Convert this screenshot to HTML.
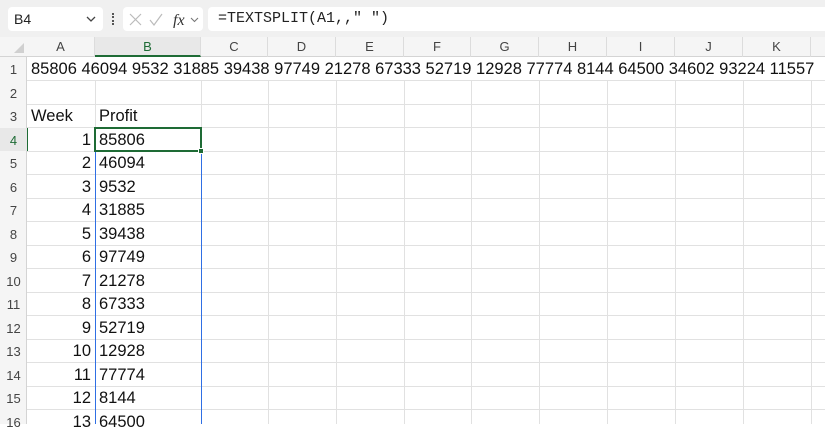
<!DOCTYPE html>
<html><head><meta charset="utf-8"><style>
*{margin:0;padding:0;box-sizing:border-box}
body{width:825px;height:424px;overflow:hidden;background:#fff;font-family:"Liberation Sans",sans-serif;position:relative}
.tb{position:absolute;left:0;top:0;width:825px;height:37px;background:#f0f0f0}
.box{position:absolute;background:#fff;border-radius:4px;top:7px;height:24px}
.abs{position:absolute}
.hdr{position:absolute;top:37px;height:20px;left:0;width:825px;background:#f5f5f5;border-bottom:1px solid #d4d4d4}
.rh{position:absolute;left:0;top:57px;width:27px;height:367px;background:#f5f5f5;border-right:1px solid #d4d4d4}
.ch{position:absolute;top:37px;height:20px;font-size:13px;color:#444;text-align:center;line-height:20px;border-right:1px solid #dcdcdc}
.rn{position:absolute;left:0;width:27px;font-size:13px;color:#444;text-align:center;height:23.5px;line-height:25px}
.c{position:absolute;font-size:16.5px;color:#111;height:23.5px;line-height:25px;white-space:nowrap}
.gl{position:absolute;left:27px;width:798px;height:1px;background:#e1e1e1}
.vl{position:absolute;top:57px;width:1px;height:367px;background:#e1e1e1}
</style></head><body>
<div class="tb"></div>
<div class="box" style="left:8px;width:95px"></div>
<div class="abs" style="left:14px;top:11px;font-size:14px;color:#222">B4</div>
<svg class="abs" style="left:86px;top:15px" width="10" height="8"><path d="M1 2l4 4 4-4" stroke="#444" fill="none" stroke-width="1.3"/></svg>
<div class="abs" style="left:112px;top:13px;width:2px;height:12px;border-left:2px dotted #555"></div>
<div class="box" style="left:123px;width:80px"></div>
<svg class="abs" style="left:128px;top:12px" width="75" height="16"><path d="M2 2l11 11M13 2L2 13" stroke="#bbb" stroke-width="1.2"/><path d="M22 8l4 5 8-11" stroke="#bbb" fill="none" stroke-width="1.2"/><text x="45" y="13" font-family="Liberation Serif" font-style="italic" font-size="16" fill="#333">fx</text><path d="M63 6l3.5 3.5 3.5-3.5" stroke="#777" fill="none" stroke-width="1.1"/></svg>
<div class="box" style="left:208px;width:625px"></div>
<div class="abs" style="left:218px;top:10px;font-size:15px;font-family:'Liberation Mono',monospace;color:#222">=TEXTSPLIT(A1,," ")</div>
<div class="hdr"></div>
<div class="rh"></div>
<svg class="abs" style="left:14px;top:43px" width="10" height="10"><path d="M10 0v10H0z" fill="#d0d0d0"/></svg>
<div class="ch" style="left:27px;width:68px">A</div>
<div class="ch" style="left:95px;width:106px;color:#1e6b35;background:#e8e8e8;border-bottom:2px solid #1e6b35">B</div>
<div class="ch" style="left:201px;width:67px">C</div>
<div class="ch" style="left:268px;width:68px">D</div>
<div class="ch" style="left:336px;width:68px">E</div>
<div class="ch" style="left:404px;width:67px">F</div>
<div class="ch" style="left:471px;width:68px">G</div>
<div class="ch" style="left:539px;width:68px">H</div>
<div class="ch" style="left:607px;width:68px">I</div>
<div class="ch" style="left:675px;width:68px">J</div>
<div class="ch" style="left:743px;width:68px">K</div>
<div class="vl" style="left:95px"></div><div class="vl" style="left:201px"></div><div class="vl" style="left:268px"></div><div class="vl" style="left:336px"></div><div class="vl" style="left:404px"></div><div class="vl" style="left:471px"></div><div class="vl" style="left:539px"></div><div class="vl" style="left:607px"></div><div class="vl" style="left:675px"></div><div class="vl" style="left:743px"></div><div class="vl" style="left:811px"></div>
<div class="gl" style="top:80px"></div><div class="gl" style="top:104px"></div><div class="gl" style="top:127px"></div><div class="gl" style="top:151px"></div><div class="gl" style="top:174px"></div><div class="gl" style="top:198px"></div><div class="gl" style="top:221px"></div><div class="gl" style="top:245px"></div><div class="gl" style="top:268px"></div><div class="gl" style="top:292px"></div><div class="gl" style="top:315px"></div><div class="gl" style="top:339px"></div><div class="gl" style="top:362px"></div><div class="gl" style="top:386px"></div><div class="gl" style="top:409px"></div>
<div class="abs" style="left:27px;top:57px;width:798px;height:23px;background:#fff"></div>
<div class="c" style="left:31px;top:57px">85806 46094 9532 31885 39438 97749 21278 67333 52719 12928 77774 8144 64500 34602 93224 11557</div>
<div class="abs" style="left:95px;top:151px;width:1px;height:273px;background:#2f6fe4"></div>
<div class="abs" style="left:201px;top:151px;width:1px;height:273px;background:#2f6fe4"></div>
<div class="abs" style="left:94px;top:127px;width:108px;height:25px;border:2px solid #1e6b35"></div>
<div class="abs" style="left:198px;top:148px;width:6px;height:6px;background:#1e6b35;border:1px solid #fff"></div>
<div class="abs" style="left:26px;top:128px;width:2px;height:23px;background:#1e6b35"></div>
<div class="rn" style="top:57px">1</div><div class="rn" style="top:80.5px">2</div><div class="rn" style="top:104px">3</div><div class="rn" style="top:127.5px;color:#1e6b35;background:#e8e8e8">4</div><div class="rn" style="top:151px">5</div><div class="rn" style="top:174.5px">6</div><div class="rn" style="top:198px">7</div><div class="rn" style="top:221.5px">8</div><div class="rn" style="top:245px">9</div><div class="rn" style="top:268.5px">10</div><div class="rn" style="top:292px">11</div><div class="rn" style="top:315.5px">12</div><div class="rn" style="top:339px">13</div><div class="rn" style="top:362.5px">14</div><div class="rn" style="top:386px">15</div><div class="rn" style="top:409.5px">16</div>
<div class="c" style="left:31px;top:104px">Week</div><div class="c" style="left:99px;top:104px">Profit</div>
<div class="c" style="right:734px;top:127.5px">1</div><div class="c" style="left:99px;top:127.5px">85806</div>
<div class="c" style="right:734px;top:151px">2</div><div class="c" style="left:99px;top:151px">46094</div>
<div class="c" style="right:734px;top:174.5px">3</div><div class="c" style="left:99px;top:174.5px">9532</div>
<div class="c" style="right:734px;top:198px">4</div><div class="c" style="left:99px;top:198px">31885</div>
<div class="c" style="right:734px;top:221.5px">5</div><div class="c" style="left:99px;top:221.5px">39438</div>
<div class="c" style="right:734px;top:245px">6</div><div class="c" style="left:99px;top:245px">97749</div>
<div class="c" style="right:734px;top:268.5px">7</div><div class="c" style="left:99px;top:268.5px">21278</div>
<div class="c" style="right:734px;top:292px">8</div><div class="c" style="left:99px;top:292px">67333</div>
<div class="c" style="right:734px;top:315.5px">9</div><div class="c" style="left:99px;top:315.5px">52719</div>
<div class="c" style="right:734px;top:339px">10</div><div class="c" style="left:99px;top:339px">12928</div>
<div class="c" style="right:734px;top:362.5px">11</div><div class="c" style="left:99px;top:362.5px">77774</div>
<div class="c" style="right:734px;top:386px">12</div><div class="c" style="left:99px;top:386px">8144</div>
<div class="c" style="right:734px;top:409.5px">13</div><div class="c" style="left:99px;top:409.5px">64500</div>
</body></html>
